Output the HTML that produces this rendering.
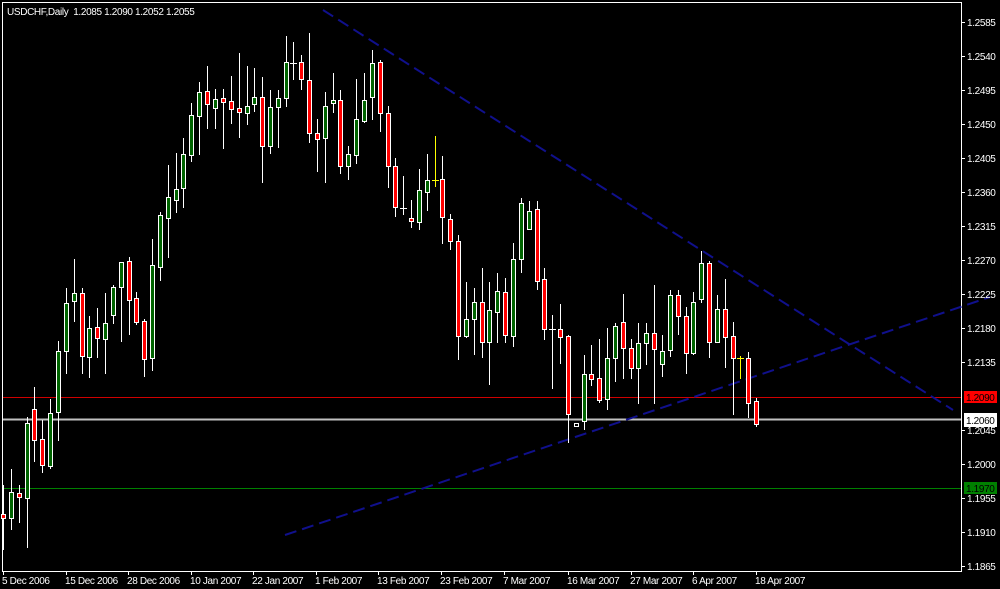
<!DOCTYPE html>
<html><head><meta charset="utf-8"><style>
html,body{margin:0;padding:0;background:#000;width:1000px;height:589px;overflow:hidden}
svg{display:block}
text{font-family:"Liberation Sans",sans-serif;font-size:10px;letter-spacing:-0.35px;fill:#fff}
.w{stroke:#fff;stroke-width:1}
.g{fill:#006400;stroke:#fff;stroke-width:1}
.r{fill:#f00;stroke:#fff;stroke-width:1}
</style></head><body>
<svg width="1000" height="589" viewBox="0 0 1000 589" xmlns="http://www.w3.org/2000/svg">
<rect x="0" y="0" width="1000" height="589" fill="#000"/>
<line x1="2.5" y1="2.5" x2="961.5" y2="2.5" stroke="#fff"/>
<line x1="2.5" y1="2" x2="2.5" y2="572" stroke="#fff"/>
<line x1="961.5" y1="2" x2="961.5" y2="572" stroke="#fff"/>
<line x1="2" y1="571.5" x2="962" y2="571.5" stroke="#fff"/>
<text x="7" y="15">USDCHF,Daily&#160;&#160;1.2085 1.2090 1.2052 1.2055</text>
<line x1="3" y1="397.5" x2="961" y2="397.5" stroke="#d00000"/>
<line x1="3" y1="419.5" x2="961" y2="419.5" stroke="#c0c0c0" stroke-width="2"/>
<line x1="3" y1="488.5" x2="961" y2="488.5" stroke="#008000"/>
<line x1="323" y1="10" x2="953" y2="410" stroke="#10108c" stroke-width="2" stroke-dasharray="12,6"/>
<line x1="285" y1="535" x2="990" y2="297" stroke="#10108c" stroke-width="2" stroke-dasharray="12,6"/>
<g id="c">
<line class="w" x1="3.5" y1="485" x2="3.5" y2="550"/><rect class="r" x="1.5" y="514.5" width="4" height="4"/>
<line class="w" x1="11.5" y1="469" x2="11.5" y2="530"/><rect class="g" x="9.5" y="492.5" width="4" height="26"/>
<line class="w" x1="19.5" y1="485" x2="19.5" y2="523"/><rect class="r" x="17.5" y="493.5" width="4" height="4"/>
<line class="w" x1="27.5" y1="417" x2="27.5" y2="548"/><rect class="g" x="25.5" y="423.5" width="4" height="75"/>
<line class="w" x1="34.5" y1="387" x2="34.5" y2="462"/><rect class="r" x="32.5" y="409.5" width="4" height="31"/>
<line class="w" x1="42.5" y1="420" x2="42.5" y2="473"/><rect class="r" x="40.5" y="439.5" width="4" height="26"/>
<line class="w" x1="50.5" y1="399" x2="50.5" y2="469"/><rect class="g" x="48.5" y="413.5" width="4" height="53"/>
<line class="w" x1="58.5" y1="341" x2="58.5" y2="441"/><rect class="g" x="56.5" y="351.5" width="4" height="61"/>
<line class="w" x1="66.5" y1="288" x2="66.5" y2="374"/><rect class="g" x="64.5" y="303.5" width="4" height="48"/>
<line class="w" x1="74.5" y1="259" x2="74.5" y2="322"/><rect class="g" x="72.5" y="293.5" width="4" height="8"/>
<line class="w" x1="82.5" y1="288" x2="82.5" y2="374"/><rect class="r" x="80.5" y="293.5" width="4" height="63"/>
<line class="w" x1="89.5" y1="316" x2="89.5" y2="378"/><rect class="g" x="87.5" y="328.5" width="4" height="29"/>
<line class="w" x1="97.5" y1="308" x2="97.5" y2="358"/><rect class="r" x="95.5" y="327.5" width="4" height="11"/>
<line class="w" x1="105.5" y1="293" x2="105.5" y2="374"/><rect class="g" x="103.5" y="323.5" width="4" height="16"/>
<line class="w" x1="113.5" y1="285" x2="113.5" y2="324"/><rect class="g" x="111.5" y="287.5" width="4" height="28"/>
<line class="w" x1="121.5" y1="262" x2="121.5" y2="342"/><rect class="g" x="119.5" y="262.5" width="4" height="25"/>
<line class="w" x1="129.5" y1="257" x2="129.5" y2="335"/><rect class="r" x="127.5" y="261.5" width="4" height="39"/>
<line class="w" x1="136.5" y1="292" x2="136.5" y2="325"/><rect class="r" x="134.5" y="298.5" width="4" height="24"/>
<line class="w" x1="144.5" y1="319" x2="144.5" y2="377"/><rect class="r" x="142.5" y="321.5" width="4" height="38"/>
<line class="w" x1="152.5" y1="239" x2="152.5" y2="371"/><rect class="g" x="150.5" y="265.5" width="4" height="93"/>
<line class="w" x1="160.5" y1="212" x2="160.5" y2="281"/><rect class="g" x="158.5" y="215.5" width="4" height="52"/>
<line class="w" x1="168.5" y1="165" x2="168.5" y2="258"/><rect class="g" x="166.5" y="197.5" width="4" height="21"/>
<line class="w" x1="176.5" y1="153" x2="176.5" y2="213"/><rect class="g" x="174.5" y="189.5" width="4" height="11"/>
<line class="w" x1="183.5" y1="138" x2="183.5" y2="208"/><rect class="g" x="181.5" y="154.5" width="4" height="34"/>
<line class="w" x1="191.5" y1="103" x2="191.5" y2="162"/><rect class="g" x="189.5" y="115.5" width="4" height="40"/>
<line class="w" x1="199.5" y1="82" x2="199.5" y2="155"/><rect class="g" x="197.5" y="92.5" width="4" height="24"/>
<line class="w" x1="207.5" y1="66" x2="207.5" y2="129"/><rect class="r" x="205.5" y="91.5" width="4" height="13"/>
<line class="w" x1="215.5" y1="89" x2="215.5" y2="129"/><rect class="g" x="213.5" y="99.5" width="4" height="9"/>
<line class="w" x1="223.5" y1="89" x2="223.5" y2="149"/><rect class="r" x="221.5" y="98.5" width="4" height="4"/>
<line class="w" x1="231.5" y1="76" x2="231.5" y2="124"/><rect class="r" x="229.5" y="101.5" width="4" height="8"/>
<line class="w" x1="239.5" y1="53" x2="239.5" y2="138"/><rect class="r" x="237.5" y="108.5" width="4" height="4"/>
<line class="w" x1="247.5" y1="66" x2="247.5" y2="125"/><rect class="g" x="245.5" y="106.5" width="4" height="7"/>
<line class="w" x1="254.5" y1="68" x2="254.5" y2="112"/><rect class="g" x="252.5" y="97.5" width="4" height="7"/>
<line class="w" x1="262.5" y1="77" x2="262.5" y2="183"/><rect class="r" x="260.5" y="97.5" width="4" height="49"/>
<line class="w" x1="270.5" y1="90" x2="270.5" y2="154"/><rect class="g" x="268.5" y="107.5" width="4" height="39"/>
<line class="w" x1="278.5" y1="90" x2="278.5" y2="148"/><rect class="g" x="276.5" y="98.5" width="4" height="9"/>
<line class="w" x1="286.5" y1="36" x2="286.5" y2="107"/><rect class="g" x="284.5" y="62.5" width="4" height="36"/>
<line class="w" x1="293.5" y1="42" x2="293.5" y2="80"/><line class="w" x1="290" y1="63.5" x2="297" y2="63.5"/>
<line class="w" x1="301.5" y1="55" x2="301.5" y2="90"/><rect class="r" x="299.5" y="62.5" width="4" height="17"/>
<line class="w" x1="309.5" y1="33" x2="309.5" y2="143"/><rect class="r" x="307.5" y="80.5" width="4" height="53"/>
<line class="w" x1="317.5" y1="119" x2="317.5" y2="172"/><rect class="r" x="315.5" y="133.5" width="4" height="6"/>
<line class="w" x1="325.5" y1="92" x2="325.5" y2="183"/><rect class="g" x="323.5" y="106.5" width="4" height="32"/>
<line class="w" x1="333.5" y1="73" x2="333.5" y2="113"/><rect class="g" x="331.5" y="100.5" width="4" height="3"/>
<line class="w" x1="340.5" y1="90" x2="340.5" y2="174"/><rect class="r" x="338.5" y="100.5" width="4" height="66"/>
<line class="w" x1="348.5" y1="146" x2="348.5" y2="180"/><rect class="g" x="346.5" y="154.5" width="4" height="12"/>
<line class="w" x1="356.5" y1="79" x2="356.5" y2="164"/><rect class="g" x="354.5" y="119.5" width="4" height="36"/>
<line class="w" x1="364.5" y1="73" x2="364.5" y2="123"/><rect class="g" x="362.5" y="100.5" width="4" height="21"/>
<line class="w" x1="372.5" y1="50" x2="372.5" y2="120"/><rect class="g" x="370.5" y="63.5" width="4" height="34"/>
<line class="w" x1="380.5" y1="60" x2="380.5" y2="132"/><rect class="r" x="378.5" y="62.5" width="4" height="51"/>
<line class="w" x1="388.5" y1="106" x2="388.5" y2="188"/><rect class="r" x="386.5" y="113.5" width="4" height="53"/>
<line class="w" x1="395.5" y1="158" x2="395.5" y2="217"/><rect class="r" x="393.5" y="166.5" width="4" height="41"/>
<line class="w" x1="403.5" y1="176" x2="403.5" y2="215"/><line class="w" x1="400" y1="208.5" x2="407" y2="208.5"/>
<line class="w" x1="411.5" y1="200" x2="411.5" y2="228"/><rect class="r" x="409.5" y="218.5" width="4" height="3"/>
<line class="w" x1="419.5" y1="169" x2="419.5" y2="230"/><rect class="g" x="417.5" y="190.5" width="4" height="32"/>
<line class="w" x1="427.5" y1="154" x2="427.5" y2="211"/><rect class="g" x="425.5" y="180.5" width="4" height="12"/>
<line x1="435.5" y1="136" x2="435.5" y2="187" stroke="#ff0"/><line x1="432" y1="180.5" x2="439" y2="180.5" stroke="#ff0"/>
<line class="w" x1="442.5" y1="156" x2="442.5" y2="244"/><rect class="r" x="440.5" y="179.5" width="4" height="38"/>
<line class="w" x1="450.5" y1="214" x2="450.5" y2="250"/><rect class="r" x="448.5" y="219.5" width="4" height="22"/>
<line class="w" x1="458.5" y1="235" x2="458.5" y2="360"/><rect class="r" x="456.5" y="241.5" width="4" height="95"/>
<line class="w" x1="466.5" y1="282" x2="466.5" y2="338"/><rect class="g" x="464.5" y="319.5" width="4" height="17"/>
<line class="w" x1="474.5" y1="288" x2="474.5" y2="355"/><rect class="g" x="472.5" y="302.5" width="4" height="17"/>
<line class="w" x1="482.5" y1="268" x2="482.5" y2="358"/><rect class="r" x="480.5" y="302.5" width="4" height="40"/>
<line class="w" x1="489.5" y1="282" x2="489.5" y2="385"/><rect class="g" x="487.5" y="310.5" width="4" height="32"/>
<line class="w" x1="497.5" y1="273" x2="497.5" y2="343"/><rect class="g" x="495.5" y="291.5" width="4" height="21"/>
<line class="w" x1="505.5" y1="278" x2="505.5" y2="343"/><rect class="r" x="503.5" y="292.5" width="4" height="43"/>
<line class="w" x1="513.5" y1="243" x2="513.5" y2="347"/><rect class="g" x="511.5" y="259.5" width="4" height="77"/>
<line class="w" x1="521.5" y1="198" x2="521.5" y2="273"/><rect class="g" x="519.5" y="203.5" width="4" height="56"/>
<line class="w" x1="529.5" y1="201" x2="529.5" y2="230"/><rect class="g" x="527.5" y="211.5" width="4" height="18"/>
<line class="w" x1="537.5" y1="201" x2="537.5" y2="290"/><rect class="r" x="535.5" y="209.5" width="4" height="72"/>
<line class="w" x1="544.5" y1="268" x2="544.5" y2="340"/><rect class="r" x="542.5" y="279.5" width="4" height="50"/>
<line class="w" x1="552.5" y1="315" x2="552.5" y2="389"/><line class="w" x1="549" y1="329.5" x2="556" y2="329.5"/>
<line class="w" x1="560.5" y1="304" x2="560.5" y2="364"/><rect class="r" x="558.5" y="329.5" width="4" height="8"/>
<line class="w" x1="568.5" y1="335" x2="568.5" y2="443"/><rect class="r" x="566.5" y="336.5" width="4" height="78"/>
<rect x="574.5" y="423.5" width="4" height="3" fill="#000" stroke="#fff"/>
<line class="w" x1="584.5" y1="355" x2="584.5" y2="430"/><rect class="g" x="582.5" y="374.5" width="4" height="47"/>
<line class="w" x1="591.5" y1="345" x2="591.5" y2="386"/><rect class="r" x="589.5" y="374.5" width="4" height="5"/>
<line class="w" x1="599.5" y1="339" x2="599.5" y2="403"/><rect class="r" x="597.5" y="378.5" width="4" height="22"/>
<line class="w" x1="607.5" y1="328" x2="607.5" y2="410"/><rect class="g" x="605.5" y="358.5" width="4" height="41"/>
<line class="w" x1="615.5" y1="323" x2="615.5" y2="382"/><rect class="g" x="613.5" y="326.5" width="4" height="32"/>
<line class="w" x1="623.5" y1="294" x2="623.5" y2="379"/><rect class="r" x="621.5" y="322.5" width="4" height="26"/>
<line class="w" x1="631.5" y1="339" x2="631.5" y2="379"/><rect class="r" x="629.5" y="348.5" width="4" height="20"/>
<line class="w" x1="638.5" y1="323" x2="638.5" y2="404"/><rect class="g" x="636.5" y="343.5" width="4" height="25"/>
<line class="w" x1="646.5" y1="323" x2="646.5" y2="365"/><rect class="g" x="644.5" y="333.5" width="4" height="10"/>
<line class="w" x1="654.5" y1="285" x2="654.5" y2="404"/><rect class="r" x="652.5" y="333.5" width="4" height="16"/>
<line class="w" x1="662.5" y1="335" x2="662.5" y2="377"/><rect class="g" x="660.5" y="351.5" width="4" height="13"/>
<line class="w" x1="670.5" y1="290" x2="670.5" y2="357"/><rect class="g" x="668.5" y="295.5" width="4" height="55"/>
<line class="w" x1="678.5" y1="290" x2="678.5" y2="335"/><rect class="r" x="676.5" y="295.5" width="4" height="21"/>
<line class="w" x1="686.5" y1="307" x2="686.5" y2="374"/><rect class="r" x="684.5" y="316.5" width="4" height="37"/>
<line class="w" x1="693.5" y1="292" x2="693.5" y2="355"/><rect class="g" x="691.5" y="302.5" width="4" height="51"/>
<line class="w" x1="701.5" y1="251" x2="701.5" y2="303"/><rect class="g" x="699.5" y="263.5" width="4" height="36"/>
<line class="w" x1="709.5" y1="261" x2="709.5" y2="358"/><rect class="r" x="707.5" y="263.5" width="4" height="79"/>
<line class="w" x1="717.5" y1="295" x2="717.5" y2="342"/><rect class="g" x="715.5" y="309.5" width="4" height="33"/>
<line class="w" x1="725.5" y1="279" x2="725.5" y2="368"/><rect class="r" x="723.5" y="309.5" width="4" height="28"/>
<line class="w" x1="733.5" y1="322" x2="733.5" y2="415"/><rect class="r" x="731.5" y="336.5" width="4" height="22"/>
<line x1="740.5" y1="356" x2="740.5" y2="379" stroke="#ff0"/><line x1="737" y1="358.5" x2="744" y2="358.5" stroke="#ff0"/>
<line class="w" x1="748.5" y1="352" x2="748.5" y2="418"/><rect class="r" x="746.5" y="358.5" width="4" height="45"/>
<line class="w" x1="756.5" y1="398" x2="756.5" y2="427"/><rect class="r" x="754.5" y="401.5" width="4" height="23"/>
</g>
<g stroke="#fff">
<line x1="962" y1="22.5" x2="965" y2="22.5"/><line x1="962" y1="56.5" x2="965" y2="56.5"/><line x1="962" y1="90.5" x2="965" y2="90.5"/><line x1="962" y1="124.5" x2="965" y2="124.5"/><line x1="962" y1="158.5" x2="965" y2="158.5"/><line x1="962" y1="192.5" x2="965" y2="192.5"/><line x1="962" y1="226.5" x2="965" y2="226.5"/><line x1="962" y1="260.5" x2="965" y2="260.5"/><line x1="962" y1="294.5" x2="965" y2="294.5"/><line x1="962" y1="328.5" x2="965" y2="328.5"/><line x1="962" y1="362.5" x2="965" y2="362.5"/><line x1="962" y1="430.5" x2="965" y2="430.5"/><line x1="962" y1="464.5" x2="965" y2="464.5"/><line x1="962" y1="498.5" x2="965" y2="498.5"/><line x1="962" y1="532.5" x2="965" y2="532.5"/><line x1="962" y1="566.5" x2="965" y2="566.5"/>
</g>
<g>
<text x="967" y="26">1.2585</text><text x="967" y="60">1.2540</text><text x="967" y="94">1.2495</text><text x="967" y="128">1.2450</text><text x="967" y="162">1.2405</text><text x="967" y="196">1.2360</text><text x="967" y="230">1.2315</text><text x="967" y="264">1.2270</text><text x="967" y="298">1.2225</text><text x="967" y="332">1.2180</text><text x="967" y="366">1.2135</text><text x="967" y="434">1.2045</text><text x="967" y="468">1.2000</text><text x="967" y="502">1.1955</text><text x="967" y="536">1.1910</text><text x="967" y="570">1.1865</text>
</g>
<rect x="964" y="391" width="33" height="12" fill="#f00"/><text x="966" y="401" style="fill:#000">1.2090</text>
<rect x="964" y="413" width="33" height="14" fill="#fff"/><text x="966" y="424" style="fill:#000">1.2060</text>
<rect x="964" y="482" width="33" height="12" fill="#008000"/><text x="966" y="492" style="fill:#000">1.1970</text>
<g stroke="#fff">
<line x1="3.5" y1="572" x2="3.5" y2="575"/><line x1="66.5" y1="572" x2="66.5" y2="575"/><line x1="128.5" y1="572" x2="128.5" y2="575"/><line x1="191.5" y1="572" x2="191.5" y2="575"/><line x1="253.5" y1="572" x2="253.5" y2="575"/><line x1="316.5" y1="572" x2="316.5" y2="575"/><line x1="378.5" y1="572" x2="378.5" y2="575"/><line x1="441.5" y1="572" x2="441.5" y2="575"/><line x1="504.5" y1="572" x2="504.5" y2="575"/><line x1="568.5" y1="572" x2="568.5" y2="575"/><line x1="631.5" y1="572" x2="631.5" y2="575"/><line x1="693.5" y1="572" x2="693.5" y2="575"/><line x1="756.5" y1="572" x2="756.5" y2="575"/>
</g>
<g>
<text x="2" y="584">5 Dec 2006</text><text x="65" y="584">15 Dec 2006</text><text x="127" y="584">28 Dec 2006</text><text x="190" y="584">10 Jan 2007</text><text x="252" y="584">22 Jan 2007</text><text x="315" y="584">1 Feb 2007</text><text x="377" y="584">13 Feb 2007</text><text x="440" y="584">23 Feb 2007</text><text x="503" y="584">7 Mar 2007</text><text x="567" y="584">16 Mar 2007</text><text x="630" y="584">27 Mar 2007</text><text x="692" y="584">6 Apr 2007</text><text x="755" y="584">18 Apr 2007</text>
</g>
</svg>
</body></html>
